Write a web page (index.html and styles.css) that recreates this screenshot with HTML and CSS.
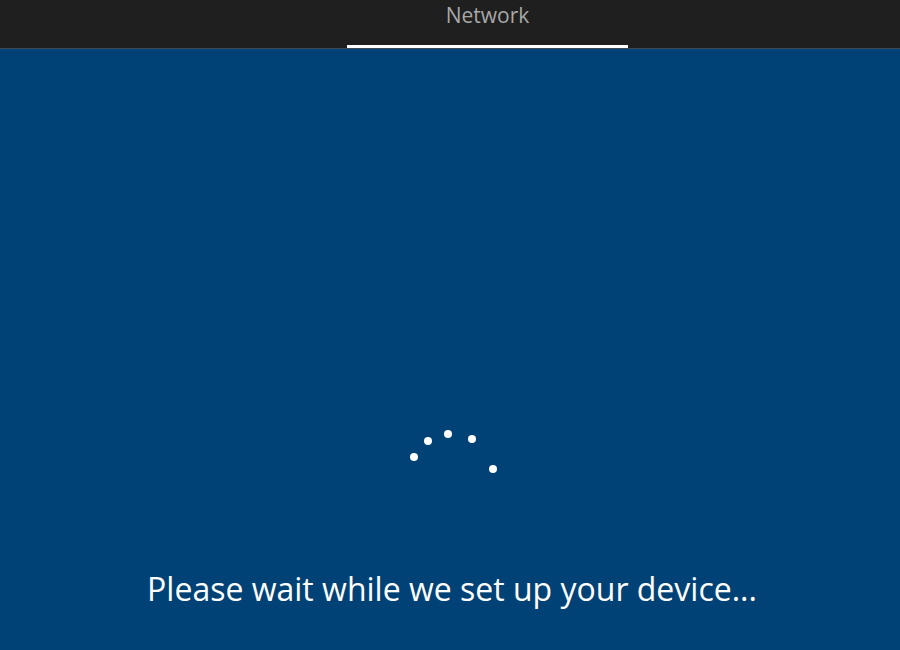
FILE: index.html
```html
<!DOCTYPE html>
<html>
<head>
<meta charset="utf-8">
<link rel="stylesheet" href="styles.css">
</head>
<body>
<div class="screen">
  <header class="topbar">
    <div class="tab">Network</div>
  </header>
  <main class="content">
    <div class="spinner">
      <span class="dot d1"></span>
      <span class="dot d2"></span>
      <span class="dot d3"></span>
      <span class="dot d4"></span>
      <span class="dot d5"></span>
    </div>
    <p class="message">Please wait while we set up your device...</p>
  </main>
</div>
</body>
</html>
```
FILE: styles.css
```css
html, body {
  margin: 0;
  padding: 0;
  width: 900px;
  height: 650px;
  overflow: hidden;
  background: #004275;
}
.screen {
  width: 900px;
  height: 650px;
  display: flex;
  flex-direction: column;
  font-family: "Open Sans", "Noto Sans", sans-serif;
}
.topbar {
  height: 49px;
  background: #1f1f1f;
  border-bottom: 1px solid #3c4a57;
  box-sizing: border-box;
  display: flex;
  justify-content: center;
  padding-left: 75px;
}
.tab {
  width: 281px;
  height: 48px;
  box-sizing: border-box;
  border-bottom: 3px solid #ffffff;
  color: #a8a8a8;
  font-size: 21px;
  text-align: center;
  line-height: 31px;
}
.content {
  flex: 1;
  background: #004275;
  position: relative;
}
.spinner {
  position: absolute;
  left: 0;
  top: 0;
  width: 900px;
  height: 601px;
}
.dot {
  position: absolute;
  width: 8px;
  height: 8px;
  border-radius: 50%;
  background: #ffffff;
}
.d1 { left: 410px; top: 404px; }
.d2 { left: 424px; top: 388px; }
.d3 { left: 444px; top: 381px; }
.d4 { left: 468px; top: 386px; }
.d5 { left: 489px; top: 416px; }
.message {
  position: absolute;
  left: 0;
  right: 0;
  top: 518px;
  margin: 0;
  text-align: center;
  color: #ffffff;
  font-size: 32px;
  font-weight: 400;
  padding-left: 4px;
}
```
